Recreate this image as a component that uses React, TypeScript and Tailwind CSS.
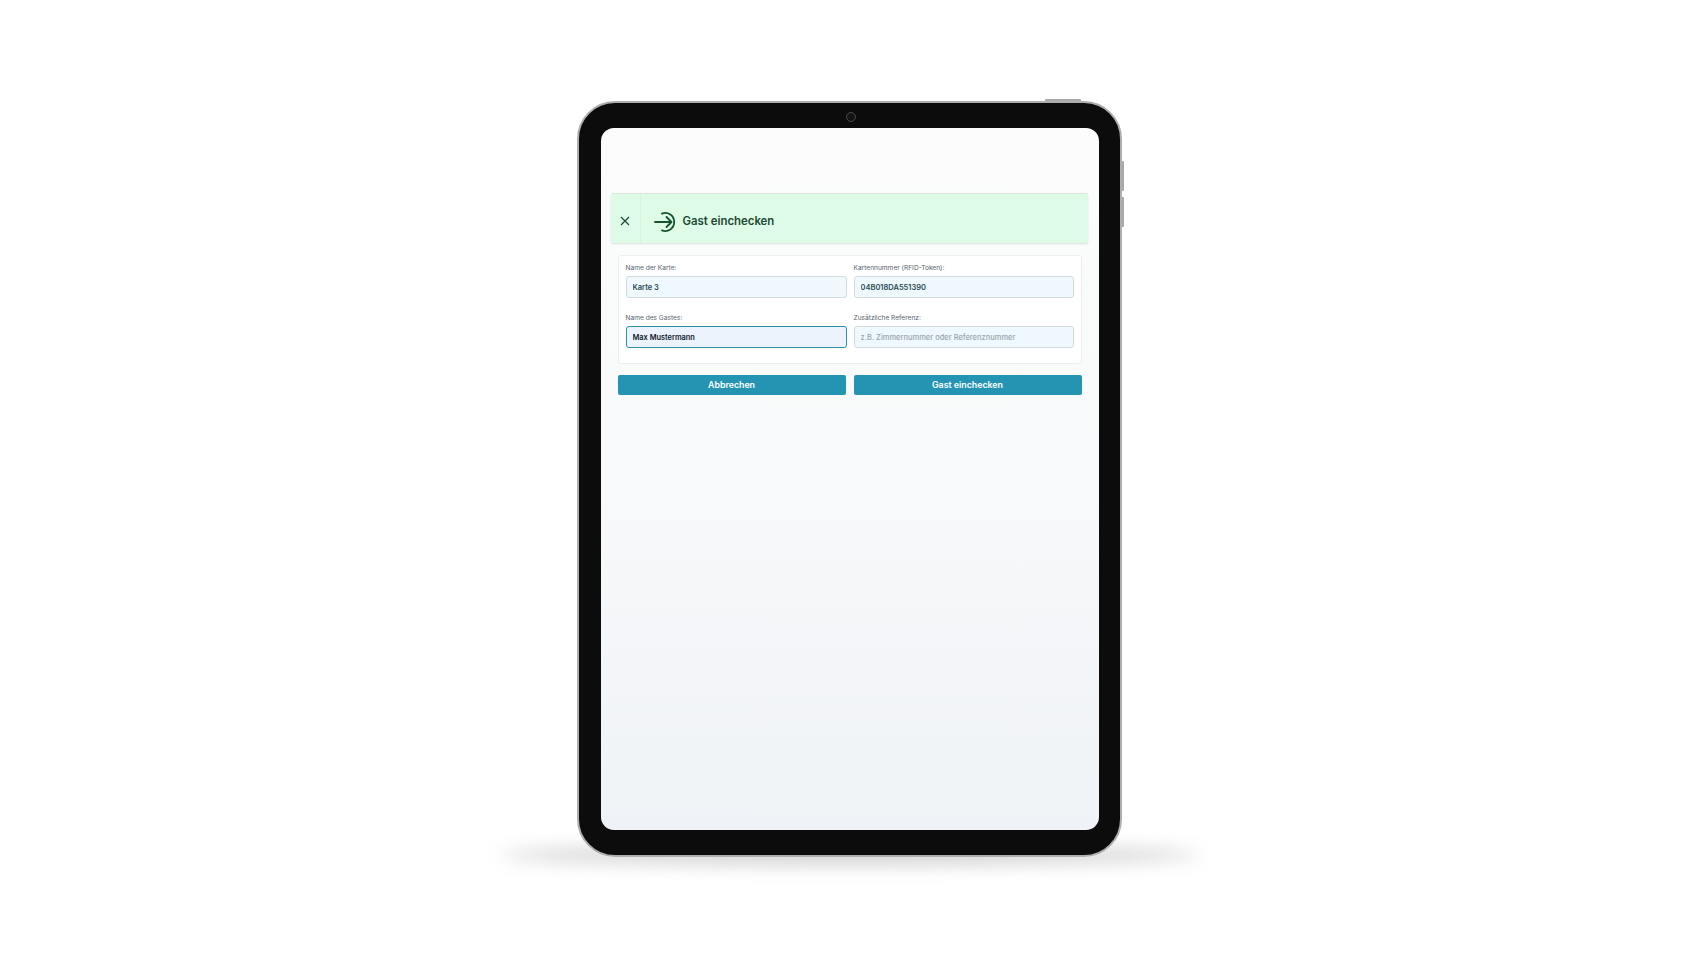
const font = "font-['Inter','Liberation_Sans',sans-serif]";

function Field({
  label,
  value,
  placeholder,
  focused,
}: {
  label: string;
  value?: string;
  placeholder?: string;
  focused?: boolean;
}) {
  return (
    <div className="flex flex-col">
      <label className="h-[20px] pt-[7px] text-[6.6px] leading-[10px] text-[#55626a]">{label}</label>
      <input
        readOnly
        value={value ?? ""}
        placeholder={placeholder}
        className={
          focused
            ? "h-[22px] w-full rounded-[3px] border-[1.5px] border-[#2a93ab] bg-[#edf3fd] px-[6px] text-[7.4px] font-semibold text-[#12212b] outline-none"
            : "h-[22px] w-full rounded-[3px] border border-[#d3dbdd] bg-[#eff8fc] px-[6px] text-[7.5px] font-semibold text-[#2a4a55] outline-none placeholder:font-medium placeholder:text-[#98a6ad]"
        }
      />
    </div>
  );
}

export default function App() {
  return (
    <div className={`${font} flex h-screen justify-center overflow-hidden bg-white pr-[2px] pt-[101px]`}>
      <div className="relative h-[756px] w-[545px]">
        {/* ground shadow */}
        <div className="absolute bottom-[-8px] left-[-76px] h-[20px] w-[698px] rounded-[50%] bg-[#8f8f8f] opacity-40 blur-[9px]" />
        {/* side buttons */}
        <div className="absolute right-[41px] top-[-2px] h-[3px] w-[36px] rounded-t-[1px] bg-[#a9a9a9]" />
        <div className="absolute right-[-2px] top-[60px] h-[30px] w-[3px] rounded-r-[1px] bg-[#a9a9a9]" />
        <div className="absolute right-[-2px] top-[96px] h-[30px] w-[3px] rounded-r-[1px] bg-[#a9a9a9]" />

        <div className="relative flex h-full flex-col rounded-[38px] border-[2px] border-[#aeaeae] bg-[#0c0c0c] pb-[25px] pl-[22px] pr-[21px] pt-[25px]">
          {/* camera */}
          <div className="absolute left-[267px] top-[9px] h-[10px] w-[10px] rounded-full border-[1.5px] border-[#4a4a4a] bg-[#141414]" />

          <div className="flex flex-1 flex-col rounded-[13px] bg-gradient-to-b from-[#fbfcfb] via-[#f8fafb] to-[#eff2f6] pt-[65px]">
            <div className="ml-[10px] flex h-[50px] w-[477px] rounded-[2px] border-t border-[#d9e6dd] bg-[#ddfbe6] shadow-[0_1px_2px_rgba(0,0,0,0.12)]">
              <div className="flex w-[30px] items-center justify-center border-r border-[#d7f3e0] pt-[5px]">
                <svg width="10" height="10" viewBox="0 0 10 10" fill="none" stroke="#1c4a34" strokeWidth="1.2">
                  <path d="M1 1l8 8M9 1l-8 8" />
                </svg>
              </div>
              <div className="flex items-center pt-[6px]">
                <svg className="ml-[13px]" width="22" height="20" viewBox="0 0 22 20" fill="none" stroke="#14532d" strokeWidth="1.8" strokeLinecap="round" strokeLinejoin="round">
                  <path d="M8 1.6A9 9 0 1 1 8 18.4" />
                  <path d="M1 10h16.5M12.5 5l5 5l-5 5" />
                </svg>
                <span className="ml-[7px] text-[11.4px] font-semibold text-[#1c4a34]">Gast einchecken</span>
              </div>
            </div>

            <div className="ml-[17px] mt-[12px] grid h-[109px] w-[464px] grid-cols-[221px_220px] content-start gap-x-[7px] gap-y-[8px] rounded-[3px] border border-[#eceff0] bg-white px-[7px]">
              <Field label="Name der Karte:" value="Karte 3" />
              <Field label="Kartennummer (RFID-Token):" value="04B018DA551390" />
              <Field label="Name des Gastes:" value="Max Mustermann" focused />
              <Field label="Zusätzliche Referenz:" placeholder="z.B. Zimmernummer oder Referenznummer" />
            </div>

            <div className="ml-[17px] mt-[11px] grid w-[464px] grid-cols-2 gap-x-[8px]">
              <button className="h-[20px] rounded-[2px] bg-[#2594b3] text-[8.8px] font-semibold text-white">Abbrechen</button>
              <button className="h-[20px] rounded-[2px] bg-[#2594b3] text-[8.8px] font-semibold text-white">Gast einchecken</button>
            </div>
          </div>
        </div>
      </div>
    </div>
  );
}
